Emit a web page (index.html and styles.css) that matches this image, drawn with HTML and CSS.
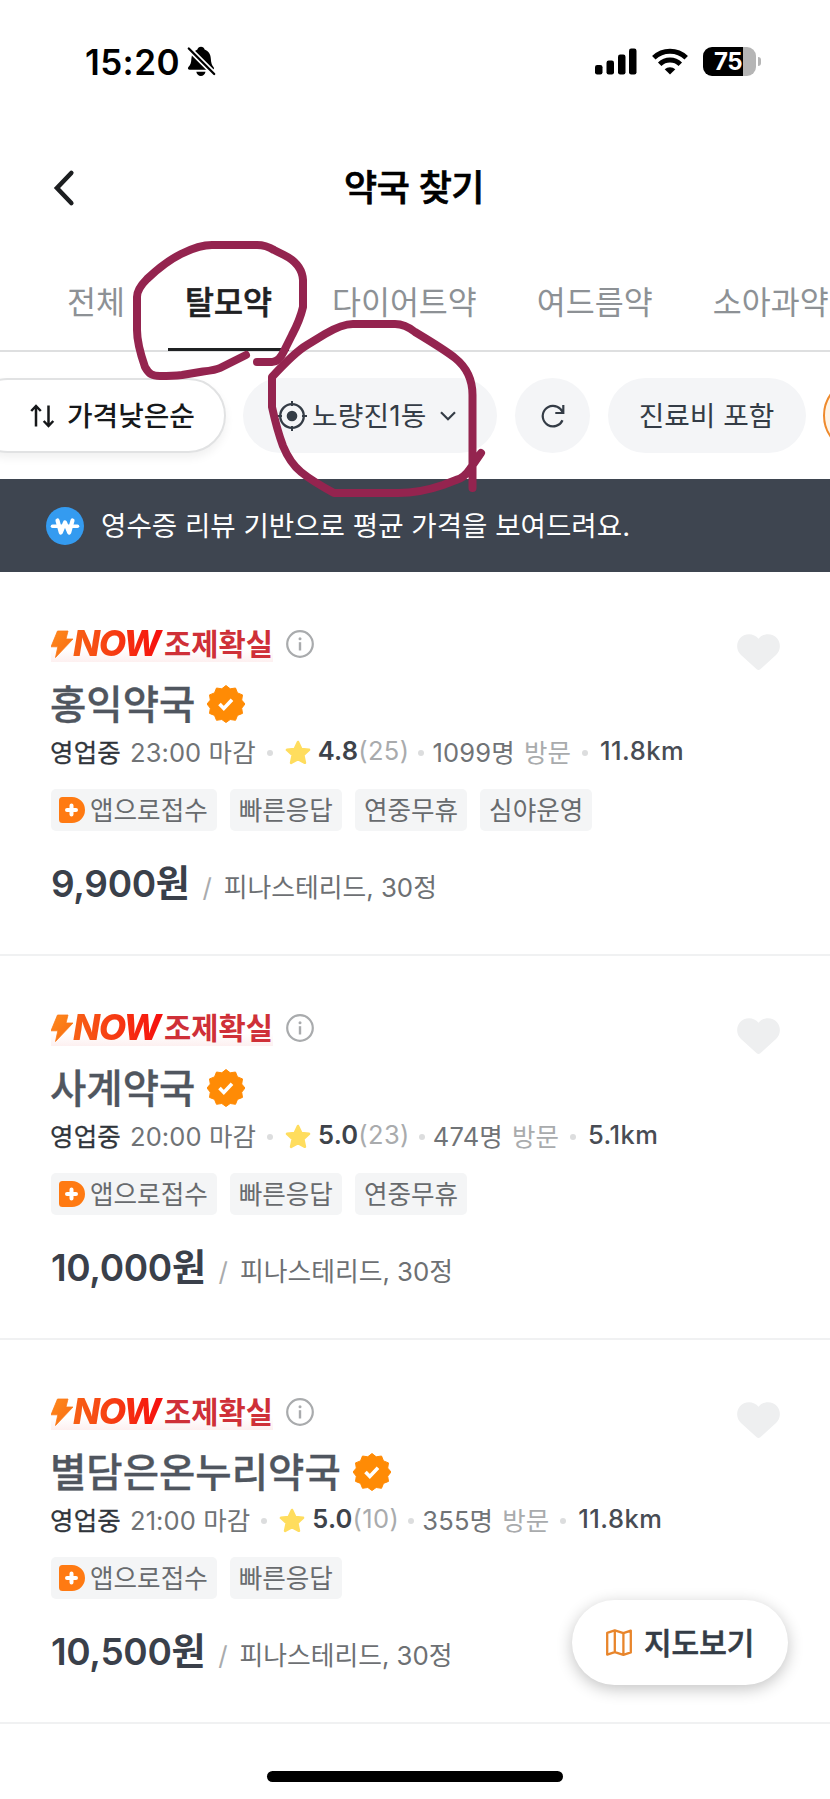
FILE: index.html
```html
<!DOCTYPE html>
<html lang="ko">
<head>
<meta charset="utf-8">
<title>약국 찾기</title>
<link rel="stylesheet" href="styles.css">
</head>
<body>
<svg class="defs" width="0" height="0" aria-hidden="true">
  <defs>
    <linearGradient id="boltFill" x1="0" x2="1" y1="0" y2="1"><stop offset="0" stop-color="#ff8a1c"/><stop offset="1" stop-color="#f76a12"/></linearGradient>
    <symbol id="bolt" viewBox="0 0 22 28"><path d="M6.500 1h10.500l-2 8H22L4.500 27.500 6.800 16.800H0z" fill="url(#boltFill)" stroke="#fb7a18" stroke-width=".8" stroke-linejoin="round"/></symbol>
    <symbol id="info" viewBox="0 0 28 28"><circle cx="14" cy="14" r="12.800" fill="none" stroke="#a9abad" stroke-width="2.200"/><circle cx="14" cy="8.700" r="1.500" fill="#a9abad"/><path d="M14 12.200v8.300" stroke="#a9abad" stroke-width="2.400"/></symbol>
    <symbol id="badge" viewBox="0 0 38 38"><path d="M19 .5l4.200 3.300 5.300-.8 2 4.900 5 2-.8 5.200L38 19l-3.300 4.200.8 5.200-5 2-2 4.900-5.300-.8L19 37.500l-4.200-3-5.300.8-2-4.900-5-2 .8-5.200L0 19l3.300-3.900-.8-5.200 5-2 2-4.900 5.300.8z" fill="#ff8b05" stroke="#ff8b05" stroke-linejoin="round"/><path d="M12.500 19l4.300 4.400 8.200-8.600" fill="none" stroke="#fff" stroke-width="3.600"/></symbol>
    <symbol id="star" viewBox="0 0 26 26"><path d="M13 2l3.300 7 7.700.9-5.700 5.200 1.600 7.700L13 19l-6.900 3.800 1.600-7.700L2 9.900 9.700 9z" fill="#ffdd5e" stroke="#ffdd5e" stroke-width="2.600" stroke-linejoin="round"/></symbol>
    <symbol id="heart" viewBox="0 0 43 36"><path d="M21.500 4.800C26-1.300 35.500-1.300 40 4.300c4.200 5.300 3.700 12-1 16.600L23.300 35.300q-1.800 1.400-3.600 0L4 20.900C-.7 16.300-1.200 9.600 3 4.300 7.500-1.300 17-1.300 21.500 4.800z" fill="#eeeff0"/></symbol>
    <symbol id="app" viewBox="0 0 26 26"><path d="M3.500 0H13a13 13 0 0 1 0 26H3.500A3.500 3.500 0 0 1 0 22.500v-19A3.500 3.500 0 0 1 3.500 0z" fill="#ff7a12"/><path d="M12.500 8.500v9M8 13h9" stroke="#fff" stroke-width="4" stroke-linecap="round"/></symbol>
  </defs>
</svg>
<div class="screen">
  <header class="status">
    <span class="clock">15:20</span>
    <svg class="bell" width="29" height="31" viewBox="0 0 29 31"><path d="M14 0.800c2 0 3 1 3.600 2.600 4 1.500 6 4.800 6.200 9 .2 4.500 1.200 7 2.800 8.800.8 1 .3 2.600-1.300 2.600H2.700c-1.700 0-2.300-1.600-1.300-2.700 2-2 2.800-4.400 3-8.700.3-4.200 2.200-7.500 6-9C11 1.800 12 .8 14 .8zM9.300 25.800h9.200c-.4 2.600-2.300 4.200-4.600 4.200s-4.200-1.600-4.600-4.200z"/><path d="M0 .7L28 28.800" stroke="#fff" stroke-width="5.500"/><path d="M1.800 2.500L27.200 28" stroke="#000" stroke-width="2.300" stroke-linecap="round"/></svg>
    <svg class="signal" width="42" height="27" viewBox="0 0 42 27"><rect x="0" y="17" width="7.500" height="9.500" rx="2.200"/><rect x="11.500" y="12.500" width="7.500" height="14" rx="2.200"/><rect x="23" y="6.500" width="7.500" height="20" rx="2.200"/><rect x="34" y="0.500" width="7.500" height="26" rx="2.200"/></svg>
    <svg class="wifi" width="36" height="27" viewBox="0 0 36 27"><g fill="none" stroke="#000" stroke-width="5"><path d="M1.800 9.700a23.400 23.400 0 0 1 32.400 0"/><path d="M7.700 16.200a15 15 0 0 1 20.600 0"/></g><path d="M18 26.500l-5.300-5.200a7.600 7.600 0 0 1 10.600 0z"/></svg>
    <span class="battery"><span class="level">75</span></span><span class="nub"></span>
  </header>

  <div class="titlebar">
    <svg class="back" width="20" height="36" viewBox="0 0 20 36"><path d="M17.300 3L3 18l14.300 15" fill="none" stroke="#1c1e20" stroke-width="4.600" stroke-linecap="round"/></svg>
    <h1 class="title">약국 찾기</h1>
  </div>

  <nav class="tabs">
    <span class="tab">전체</span><span class="tab active">탈모약</span><span class="tab">다이어트약</span><span class="tab">여드름약</span><span class="tab">소아과약</span>
  </nav>

  <div class="filters">
    <span class="chip sort"><svg width="25" height="24" viewBox="0 0 25 24"><path d="M6 22.500V2M1.200 7L6 2l4.800 5M18.500 1.500V22M13.700 17l4.800 5 4.800-5" fill="none" stroke="#16181a" stroke-width="2.500"/></svg><span class="label">가격낮은순</span></span>
    <span class="chip place"><svg width="30" height="30" viewBox="0 0 30 30"><circle cx="15" cy="15" r="11.800" fill="none" stroke="#343c46" stroke-width="2.300"/><circle cx="15" cy="15" r="5.300" fill="#343c46"/><path d="M15 0v5M15 25v5M0 15h5M25 15h5" stroke="#343c46" stroke-width="2"/></svg><span class="label">노량진1동</span><svg class="caret" width="16" height="10" viewBox="0 0 16 10"><path d="M1 1.200l7 7 7-7" fill="none" stroke="#343c46" stroke-width="2.200"/></svg></span>
    <span class="chip reload"><svg width="24" height="24" viewBox="0 0 24 24"><path d="M21.500 16.200A10.300 10.300 0 1 1 19.500 5l2.500 3.500M22.300 1v8h-8" fill="none" stroke="#343c46" stroke-width="2.200"/></svg></span>
    <span class="chip fee"><span class="label">진료비 포함</span></span>
    <span class="chip more"></span>
  </div>

  <div class="notice">
    <svg width="38" height="38" viewBox="0 0 38 38"><circle cx="19" cy="19" r="19" fill="#349bf0"/><path d="M11.500 13.500l3.300 12L19 15.500l4.200 10 3.300-12" fill="none" stroke="#fff" stroke-width="4.200" stroke-linejoin="round" stroke-linecap="round"/><path d="M6.500 19.200h25" stroke="#fff" stroke-width="3.600" stroke-linecap="round"/></svg>
    <span class="label">영수증 리뷰 기반으로 평균 가격을 보여드려요.</span>
  </div>

  <main class="list">
    <article class="card">
      <svg class="heart"><use href="#heart"/></svg>
      <div class="now"><span class="flag"><svg class="bolt"><use href="#bolt"/></svg><b class="word">NOW</b><span class="sure">조제확실</span></span><svg class="info"><use href="#info"/></svg></div>
      <h2 class="name"><span class="label">홍익약국</span><svg class="badge"><use href="#badge"/></svg></h2>
      <div class="meta"><span class="open">영업중</span><span class="close">23:00 마감</span><i class="dot"></i><svg class="star"><use href="#star"/></svg><b class="score">4.8</b><span class="count">(25)</span><i class="dot second"></i><span class="visits">1099명</span><span class="visit">방문</span><i class="dot last"></i><span class="dist">11.8km</span></div>
      <div class="tags"><span class="tag app"><svg><use href="#app"/></svg><span class="label">앱으로접수</span></span><span class="tag"><span class="label">빠른응답</span></span><span class="tag"><span class="label">연중무휴</span></span><span class="tag"><span class="label">심야운영</span></span></div>
      <div class="price"><b class="won">9,900원</b><span class="slash">/</span><span class="drug">피나스테리드, 30정</span></div>
    </article>
    <article class="card">
      <svg class="heart"><use href="#heart"/></svg>
      <div class="now"><span class="flag"><svg class="bolt"><use href="#bolt"/></svg><b class="word">NOW</b><span class="sure">조제확실</span></span><svg class="info"><use href="#info"/></svg></div>
      <h2 class="name"><span class="label">사계약국</span><svg class="badge"><use href="#badge"/></svg></h2>
      <div class="meta"><span class="open">영업중</span><span class="close">20:00 마감</span><i class="dot"></i><svg class="star"><use href="#star"/></svg><b class="score">5.0</b><span class="count">(23)</span><i class="dot second"></i><span class="visits">474명</span><span class="visit">방문</span><i class="dot last"></i><span class="dist">5.1km</span></div>
      <div class="tags"><span class="tag app"><svg><use href="#app"/></svg><span class="label">앱으로접수</span></span><span class="tag"><span class="label">빠른응답</span></span><span class="tag"><span class="label">연중무휴</span></span></div>
      <div class="price"><b class="won">10,000원</b><span class="slash">/</span><span class="drug">피나스테리드, 30정</span></div>
    </article>
    <article class="card">
      <svg class="heart"><use href="#heart"/></svg>
      <div class="now"><span class="flag"><svg class="bolt"><use href="#bolt"/></svg><b class="word">NOW</b><span class="sure">조제확실</span></span><svg class="info"><use href="#info"/></svg></div>
      <h2 class="name"><span class="label">별담은온누리약국</span><svg class="badge"><use href="#badge"/></svg></h2>
      <div class="meta"><span class="open">영업중</span><span class="close">21:00 마감</span><i class="dot"></i><svg class="star"><use href="#star"/></svg><b class="score">5.0</b><span class="count">(10)</span><i class="dot second"></i><span class="visits">355명</span><span class="visit">방문</span><i class="dot last"></i><span class="dist">11.8km</span></div>
      <div class="tags"><span class="tag app"><svg><use href="#app"/></svg><span class="label">앱으로접수</span></span><span class="tag"><span class="label">빠른응답</span></span></div>
      <div class="price"><b class="won">10,500원</b><span class="slash">/</span><span class="drug">피나스테리드, 30정</span></div>
    </article>
  </main>

  <div class="homebar"></div>

  <div class="fab"><svg width="26" height="27" viewBox="0 0 26 27"><path d="M1.200 3.800L8.800 1.300l8.600 2.800 7.400-2.500v21.800l-7.400 2.400-8.600-2.600-7.600 2.400zM8.800 1.300v21.900M17.400 4.100v21.700" fill="none" stroke="#e8852b" stroke-width="2.300" stroke-linejoin="round"/></svg><span class="label">지도보기</span></div>

  <svg class="ink" width="830" height="600" viewBox="0 0 830 600"><g fill="none" stroke="#94244f" stroke-width="8" stroke-linecap="round" stroke-linejoin="round">
    <path d="M246 355L220 368Q216 370 203 371.500L182 375Q173 376 160 376C152 376 149 374 145 367Q137 344 137 330V297Q137 289 147 279Q165 262 181 254Q199 245 212 245H257Q266 245 274 250L284 255Q302 264 303 280V307Q300 320 292 335L284 351Q279 362 272 362H257"/>
    <path d="M472.500 488V395Q472.500 372 455 358Q445 350 415 332Q405 324 395 324H353Q342 324 325 334L307 345Q295 352 272 377V407Q277 430 283 446Q290 463 301 472Q312 481 334 493H398Q420 493 443 485L456 480Q464 478 470 469L481 453"/>
  </g></svg>
</div>
</body>
</html>
```
FILE: styles.css
```css
* { box-sizing: border-box; }
body {
  margin: 0;
  background: #fff;
  font-family: Inter, "Noto Sans CJK KR", sans-serif;
}
.defs { position: absolute; }
svg { display: block; flex: none; overflow: visible; }
.screen {
  position: relative;
  width: 830px;
  height: 1799px;
  overflow: hidden;
  background: #fff;
  white-space: nowrap;
}
/* Optical centring of Hangul beside icons */
.label { margin-bottom: 3px; }

.status {
  display: flex;
  align-items: center;
  height: 123px;
  padding-left: 85px;
}
.clock { width: 102px; font-size: 35px; font-weight: 600; line-height: 40px; letter-spacing: .4px; }
.signal { margin-left: 379px; }
.wifi { margin-left: 15px; }
.battery {
  width: 53px;
  height: 29px;
  margin-left: 15px;
  border-radius: 9px;
  overflow: hidden;
  background: linear-gradient(90deg, #000 40px, #b5b5b5 40px);
}
.level {
  display: block;
  padding-left: 11px;
  color: #fff;
  font-size: 24px;
  font-weight: 700;
  line-height: 29px;
  letter-spacing: -.5px;
}
.nub { width: 3px; height: 9px; margin-left: 2px; border-radius: 0 4px 4px 0; background: #b5b5b5; }

.titlebar {
  display: flex;
  align-items: center;
  height: 130px;
  padding-left: 54px;
}
.title {
  margin: 0 0 0 270px;
  font-size: 36px;
  font-weight: 500;
  line-height: 40px;
  letter-spacing: -0.4px;
  -webkit-text-stroke: .7px #000;
}

.tabs {
  display: flex;
  gap: 26px;
  height: 99px;
  padding-left: 50px;
  border-bottom: 2px solid #dedfe0;
}
.tab {
  flex: none;
  height: 98px;
  padding: 30px 17px 0;
  color: #8d9195;
  font-size: 31.500px;
  line-height: 40px;
}
.tab.active {
  border-bottom: 3px solid #1f2123;
  color: #1f2123;
  font-weight: 500;
  -webkit-text-stroke: .6px #1f2123;
}

.filters { display: flex; gap: 18px; height: 127px; padding-top: 26px; }
.chip {
  display: flex;
  flex: none;
  align-items: center;
  height: 75px;
  border-radius: 38px;
  background: #f4f5f7;
  color: #343c46;
  font-size: 27.800px;
}
.sort {
  gap: 12px;
  width: 256px;
  margin-left: -30px;
  padding-left: 58px;
  border: 2px solid #e1e2e3;
  background: #fff;
  box-shadow: 0 5px 10px rgba(0, 0, 0, .06);
  color: #16181a;
  font-weight: 500;
}
.place { width: 254px; margin-left: -1px; padding-left: 34px; }
.place > svg:first-child { margin-right: 5px; }
.place .label { letter-spacing: .2px; }
.caret { margin-left: 13px; }
.reload { width: 75px; justify-content: center; }
.fee { width: 198px; padding-right: 1px; justify-content: center; }
.more { width: 120px; margin-left: -1px; border: 2px solid #ef8a2c; background: #fff4e6; }

.notice {
  display: flex;
  align-items: center;
  gap: 17px;
  height: 93px;
  padding-left: 46px;
  background: #3e4550;
  color: #fff;
  font-size: 27.600px;
}

.card {
  position: relative;
  height: 384px;
  padding: 55px 0 0 51px;
  border-bottom: 2px solid #f0f1f2;
}
.heart { position: absolute; left: 737px; top: 62px; width: 43px; height: 36px; }
.now { display: flex; align-items: center; height: 34px; }
.flag {
  display: flex;
  align-items: center;
  width: 222px;
  height: 36px;
  background: linear-gradient(#fff 65%, #fdf0f0);
}
.bolt { width: 22px; height: 28px; }
.word {
  width: 93px;
  background: linear-gradient(90deg, #f76216, #f60d0d);
  -webkit-background-clip: text;
  background-clip: text;
  color: transparent;
  font-size: 35.500px;
  font-style: italic;
  font-weight: 800;
  line-height: 34px;
  letter-spacing: -1.400px;
}
.sure { color: #cf3038; font-size: 29.600px; font-weight: 700; line-height: 34px; }
.info { width: 28px; height: 28px; margin-left: 13px; }
.name {
  display: flex;
  align-items: center;
  gap: 12px;
  height: 40px;
  margin: 23px 0 0;
  color: #50565f;
  font-size: 39.500px;
  font-weight: 500;
  -webkit-text-stroke: .3px #50565f;
}
.name .label { margin: 0 0 5px -1px; }
.badge { width: 38px; height: 38px; }
.meta {
  display: flex;
  align-items: center;
  height: 30px;
  margin-top: 11px;
  color: #707376;
  font-size: 25.500px;
}
.open { margin: 0 9px 0 -1px; color: #30353b; letter-spacing: .2px; -webkit-text-stroke: .3px #30353b; }
.close { letter-spacing: .1px; }
.dot { width: 6px; height: 6px; margin: 5px 12px 0 11px; border-radius: 50%; background: #dcddde; }
.star { width: 26px; height: 26px; margin: 5px 7px 0 0; }
.score { color: #3e434a; font-weight: 600; letter-spacing: .2px; }
.count, .visit { color: #a9abad; }
.count { letter-spacing: .4px; }
.dot.second { margin-left: 9px; margin-right: 8px; }
.visits { margin-right: 9px; letter-spacing: .2px; }
.dot.last { margin-right: 12px; }
.dist { color: #484c54; font-weight: 500; letter-spacing: .5px; }
.tags { display: flex; gap: 13px; margin-top: 24px; }
.tag {
  display: flex;
  align-items: center;
  height: 42px;
  padding: 0 9px;
  border-radius: 5px;
  background: #f4f5f6;
  color: #686b6e;
  font-size: 25.600px;
}
.tag.app { gap: 5px; padding-left: 8px; }
.tag svg { width: 26px; height: 26px; }
.price { display: flex; align-items: baseline; margin-top: 28px; line-height: 50px; }
.won { color: #3a404a; font-size: 37px; font-weight: 600; letter-spacing: -.35px; }
.slash { margin: 0 12px 0 13px; color: #a9abad; font-size: 26px; }
.drug { color: #6d7073; font-size: 25.800px; }

.homebar {
  width: 296px;
  height: 11px;
  margin: 47px 0 0 267px;
  border-radius: 6px;
  background: #000;
}
.fab {
  position: absolute;
  left: 572px;
  top: 1600px;
  display: flex;
  align-items: center;
  gap: 12px;
  width: 216px;
  height: 85px;
  padding-left: 34px;
  border-radius: 43px;
  background: #fff;
  box-shadow: 0 4px 16px rgba(0, 0, 0, .24);
  color: #343c46;
  font-size: 30px;
  font-weight: 500;
  -webkit-text-stroke: .6px #343c46;
}
.fab .label { margin-bottom: 4px; }
.ink { position: absolute; left: 0; top: 0; pointer-events: none; }
```
